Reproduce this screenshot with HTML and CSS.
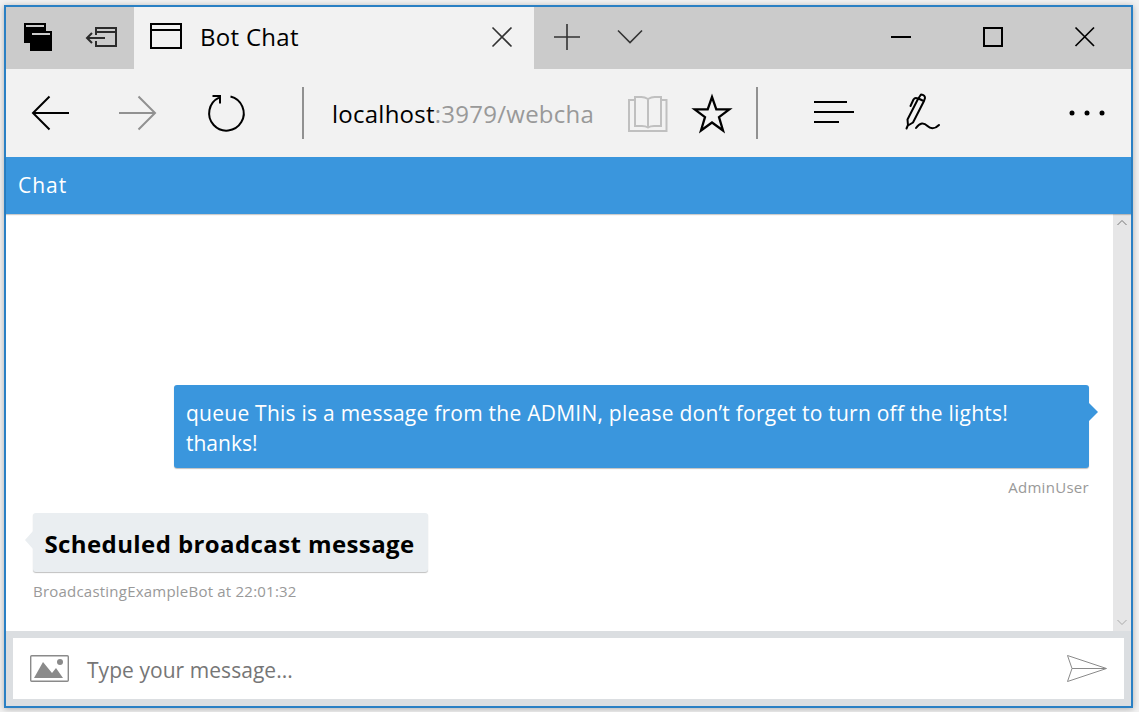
FILE: index.html
```html
<!DOCTYPE html>
<html lang="en">
<head>
<meta charset="utf-8">
<title>Bot Chat</title>
<link rel="stylesheet" href="styles.css">
</head>
<body>
<div class="window">
  <div class="titlebar">
    <div class="tab-tools">
      <svg width="64" height="62" viewBox="6 7 64 62"><path d="M24 23h22v8h6v20H30v-8h-6z"/><path d="M26 26h18M32 34h18" stroke="#ccc" stroke-width="2"/></svg>
      <svg class="line dim" width="64" height="62" viewBox="70 7 64 62"><path d="M96 35v-7h20v18H96v-5M96 32h20M87 38h18M92 33l-5 5 5 5"/></svg>
    </div>
    <div class="tab">
      <svg class="line" width="48" height="62" viewBox="134 7 48 62"><path d="M151 24h30v24h-30zM151 30h30"/></svg>
      <span class="tab-title">Bot Chat</span>
      <svg class="line thin" width="64" height="62" viewBox="470 7 64 62"><path d="M492.500 27.500l19 19M511.500 27.500l-19 19"/></svg>
    </div>
    <svg class="line thin" width="66" height="62" viewBox="534 7 66 62"><path d="M554 37h26M567 24v26"/></svg>
    <svg class="line thin" width="60" height="62" viewBox="600 7 60 62"><path d="M618 30.500l12 12 12-12"/></svg>
    <div class="window-buttons">
      <svg class="line" width="92" height="62" viewBox="855 7 92 62"><path d="M891 37h20"/></svg>
      <svg class="line" width="92" height="62" viewBox="947 7 92 62"><path d="M984 28h18v18h-18z"/></svg>
      <svg class="line mid" width="92" height="62" viewBox="1039 7 92 62"><path d="M1075.500 27.500l18.500 18.500M1094 27.500l-18.500 18.500"/></svg>
    </div>
  </div>
  <div class="toolbar">
    <svg class="line" width="88" height="88" viewBox="6 69 88 88"><path d="M69 113H33M49.500 96.500L33 113l16.500 16.500"/></svg>
    <svg class="line muted" width="88" height="88" viewBox="94 69 88 88"><path d="M119 113h36M138.500 96.500L155 113l-16.500 16.500"/></svg>
    <svg class="line" width="88" height="88" viewBox="182 69 88 88"><path d="M230.500 96.500a17.300 17.300 0 1 1-11.500 1.200M212.500 96h7.500v7.500"/></svg>
    <svg class="line muted" width="62" height="88" viewBox="270 69 62 88"><path d="M303 87v52"/></svg>
    <div class="address"><span class="host">localhost</span>:3979/webcha</div>
    <svg class="line book" width="61" height="88" viewBox="617 69 61 88"><path d="M634 100h-5v31h37.500v-31h-5M648 99q-4-2.500-8-2h-5v29h5q5-.5 8 1.500q3-2 8-1.500h5V97h-5q-4-.5-8 2zM648 99v29"/></svg>
    <svg class="line star" width="68" height="88" viewBox="678 69 68 88"><path d="M712 97l4.300 12.300h13L719 117.200l4 13.300-11-8-11 8 4-13.300-10.300-7.900h13z"/></svg>
    <svg class="line muted" width="44" height="88" viewBox="746 69 44 88"><path d="M757 87v52"/></svg>
    <svg class="line" width="88" height="88" viewBox="790 69 88 88"><path d="M814 102h33M814 112h40M814 122h25"/></svg>
    <svg class="line pen" width="88" height="88" viewBox="878 69 88 88"><path d="M921 94.500q4 .5 4 3.500l-1 3-11 21.500-5 3-.5-6L918 99zM918.500 98.500l5 2.500M918 98.500q-3-1.500-4.500 1l-3 6.500M908 125l-1.500 3.500M916 128c4-6 8-5.500 11.500-2s8 2.500 11.500-1"/></svg>
    <svg class="more" width="88" height="88" viewBox="1043 69 88 88"><circle cx="1072" cy="113" r="2.500"/><circle cx="1087" cy="113" r="2.500"/><circle cx="1102" cy="113" r="2.500"/></svg>
  </div>
  <div class="chat-header"><span>Chat</span></div>
  <div class="chat-body">
    <div class="messages">
      <div class="message from-me">
        <div class="bubble"><div class="line-1">queue This is a message from the ADMIN, please don’t forget to turn off the lights!</div><div class="line-2">thanks!</div>
          <svg class="nub" width="9" height="18" viewBox="0 0 9 18"><path d="M0 0l9 9-9 9z"/></svg></div>
        <div class="meta"><span class="meta-me">AdminUser</span></div>
      </div>
      <div class="message from-bot">
        <div class="bubble"><span class="heading">Scheduled broadcast message</span>
          <svg class="nub" width="8" height="18" viewBox="0 0 8 18"><path d="M8 0L0 9l8 9z"/></svg></div>
        <div class="meta"><span class="meta-bot">BroadcastingExampleBot at 22:01:32</span></div>
      </div>
    </div>
    <div class="scrollbar">
      <svg width="18" height="18" viewBox="0 0 18 18"><path d="M4.500 11l4.500-4.500 4.500 4.500" stroke="#777"/></svg>
      <svg width="18" height="18" viewBox="0 0 18 18"><path d="M4.500 7l4.500 4.500L13.500 7" stroke="#aaa"/></svg>
    </div>
  </div>
  <div class="composer">
    <div class="composer-box">
      <svg class="photo" width="74" height="61" viewBox="13 638 74 61"><rect x="30.700" y="655.700" width="37.600" height="25.600" rx="1" fill="none" stroke="#8a8a8a" stroke-width="1.400"/><path d="M34 678l9-16 9 11 4-5 7 10z"/><circle cx="60" cy="662" r="3"/></svg>
      <span class="placeholder">Type your message...</span>
      <svg class="send" width="74" height="61" viewBox="1050 638 74 61"><path d="M1067.500 655.500l39 13-39 13 4.500-13zM1072 668.500h34"/></svg>
    </div>
  </div>
</div>
</body>
</html>
```
FILE: styles.css
```css
* { box-sizing: border-box; }
body {
  margin: 0;
  width: 1139px;
  height: 712px;
  padding: 5px 6px 4px 4px;
  overflow: hidden;
  background: #f1f1f1;
  font-family: "Open Sans", "Noto Sans", sans-serif;
}
svg { display: block; flex: none; }
.window {
  width: 1129px;
  height: 703px;
  border: 2px solid #2a80c4;
  background: #fff;
  box-shadow: 0 1px 6px rgba(0, 0, 0, 0.28);
  display: flex;
  flex-direction: column;
}
.line { fill: none; stroke: #000; stroke-width: 2; }
.dim { stroke: #2b2b2b; }
.thin { stroke: #333; stroke-width: 1.6; }
.mid { stroke-width: 1.7; }
.muted { stroke: #919191; }
.book { stroke: #c0c0c0; }
.star { stroke-width: 2.3; }
.pen { stroke-linejoin: round; stroke-linecap: round; }
.titlebar { height: 62px; background: #cbcbcb; display: flex; flex: none; }
.tab-tools { display: flex; width: 128px; }
.tab { width: 400px; background: #f2f2f2; display: flex; align-items: flex-start; }
.tab-title { font-size: 24px; line-height: 60px; letter-spacing: 0.3px; margin-left: 18px; flex: 1; white-space: nowrap; }
.window-buttons { display: flex; margin-left: auto; }
.toolbar { height: 88px; flex: none; background: #f2f2f2; display: flex; }
.address { width: 285px; font-size: 24px; line-height: 89px; letter-spacing: 0.25px; color: #999; white-space: nowrap; }
.host { color: #000; }
.more { margin-left: auto; }
.chat-header {
  height: 57px;
  flex: none;
  padding-left: 12px;
  background: #3a96dd;
  color: #fff;
  font-size: 21px;
  line-height: 57px;
  letter-spacing: 1px;
  box-shadow: 0 1px 1px rgba(0, 0, 0, 0.2);
  z-index: 1;
}
.chat-body { height: 417px; flex: none; display: flex; }
.messages {
  flex: 1;
  display: flex;
  flex-direction: column;
  justify-content: flex-end;
  padding: 0 24px 26px 26px;
}
.message { display: flex; flex-direction: column; }
.from-me { align-items: flex-end; }
.from-bot { align-items: flex-start; margin-top: 12px; }
.bubble { position: relative; border-radius: 3px; box-shadow: 0 1px 1px rgba(0, 0, 0, 0.25); white-space: nowrap; }
.from-me .bubble {
  width: 915px;
  height: 83px;
  padding: 13px 12px;
  background: #3a96dd;
  color: #fff;
  font-size: 21px;
  line-height: 30px;
}
.line-1 { letter-spacing: 0.245px; }
.from-bot .bubble {
  width: 395px;
  height: 59px;
  padding-left: 12px;
  background: #eaeef1;
  font-size: 24px;
  font-weight: 700;
  line-height: 61px;
  letter-spacing: 0.4px;
}
.nub { position: absolute; top: 18px; }
.from-me .nub { left: 100%; fill: #3a96dd; }
.from-bot .nub { right: 100%; fill: #eaeef1; }
.meta { height: 33px; font-size: 15px; line-height: 39px; letter-spacing: 0.22px; color: #999; white-space: nowrap; }
.meta-me { letter-spacing: 0.3px; }
.meta-bot { padding-left: 1px; }
.from-bot .bubble { margin-left: 0.5px; }
.scrollbar {
  width: 18px;
  background: #e6e6e7;
  display: flex;
  flex-direction: column;
  justify-content: space-between;
  fill: none;
}
.composer { height: 75px; padding: 7px; background: #dbdee1; }
.composer-box { height: 61px; background: #fff; display: flex; }
.photo { fill: #8a8a8a; }
.placeholder { flex: 1; font-size: 21px; line-height: 65px; letter-spacing: 0.05px; color: #767676; }
.send { fill: none; stroke: #8a8a8a; }
```
